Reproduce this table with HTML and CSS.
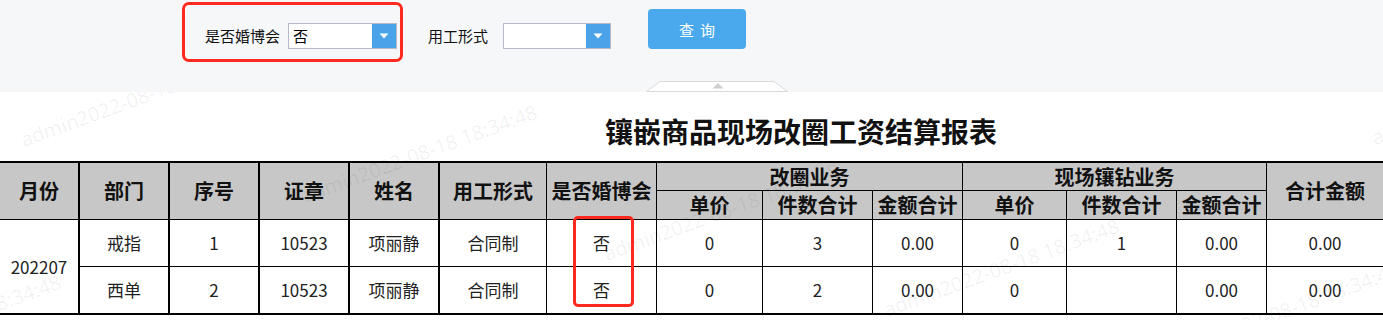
FILE: index.html
```html
<!DOCTYPE html>
<html lang="zh-CN">
<head>
<meta charset="utf-8">
<title>镶嵌商品现场改圈工资结算报表</title>
<link rel="stylesheet" href="styles.css">
</head>
<body>
<div class="page">
  <div class="panel">
    <div class="filters">
      <div class="filter filter-hl">
        <span class="flabel">是否婚博会</span>
        <div class="select sel1">
          <span class="sval">否</span>
          <span class="sbtn"><svg width="10" height="6" viewBox="0 0 10 6"><path d="M0.5 0.5 L9.5 0.5 L5 5.5 Z" fill="#fff"/></svg></span>
        </div>
      </div>
      <div class="filter filter2">
        <span class="flabel flabel2">用工形式</span>
        <div class="select sel2">
          <span class="sval"></span>
          <span class="sbtn"><svg width="10" height="6" viewBox="0 0 10 6"><path d="M0.5 0.5 L9.5 0.5 L5 5.5 Z" fill="#fff"/></svg></span>
        </div>
      </div>
      <button class="query">查询</button>
    </div>
    <svg class="handle" width="142" height="11" viewBox="0 0 142 11">
      <path d="M14 0.5 L128 0.5 L141.5 10.5 L0.5 10.5 Z" fill="#fff" stroke="#d9d9d9" stroke-width="1"/>
      <path d="M72 2 L66.5 7.5 L77.5 7.5 Z" fill="#cfcfcf"/>
    </svg>
  </div>

  <h1 class="title">镶嵌商品现场改圈工资结算报表</h1>

  <div class="tablewrap">
    <table class="report">
      <colgroup>
        <col class="w80"><col class="w90"><col class="w90"><col class="w90"><col class="w90">
        <col class="w107"><col class="w110"><col class="w106"><col class="w110"><col class="w90">
        <col class="w104"><col class="w110"><col class="w90"><col class="w116">
      </colgroup>
      <thead>
        <tr class="hr1">
          <th rowspan="2" class="thick">月份</th>
          <th rowspan="2" class="thick">部门</th>
          <th rowspan="2" class="thick">序号</th>
          <th rowspan="2" class="thick">证章</th>
          <th rowspan="2" class="thick">姓名</th>
          <th rowspan="2">用工形式</th>
          <th rowspan="2">是否婚博会</th>
          <th colspan="3">改圈业务</th>
          <th colspan="3">现场镶钻业务</th>
          <th rowspan="2" class="last">合计金额</th>
        </tr>
        <tr class="hr2">
          <th>单价</th><th>件数合计</th><th>金额合计</th>
          <th>单价</th><th>件数合计</th><th>金额合计</th>
        </tr>
      </thead>
      <tbody>
        <tr class="dr1">
          <td rowspan="2" class="thick month">202207</td>
          <td class="thick">戒指</td>
          <td class="thick">1</td>
          <td class="thick">10523</td>
          <td class="thick">项丽静</td>
          <td>合同制</td>
          <td>否</td>
          <td>0</td>
          <td>3</td>
          <td>0.00</td>
          <td>0</td>
          <td>1</td>
          <td>0.00</td>
          <td class="last">0.00</td>
        </tr>
        <tr class="dr2">
          <td class="thick">西单</td>
          <td class="thick">2</td>
          <td class="thick">10523</td>
          <td class="thick">项丽静</td>
          <td>合同制</td>
          <td>否</td>
          <td>0</td>
          <td>2</td>
          <td>0.00</td>
          <td>0</td>
          <td></td>
          <td>0.00</td>
          <td class="last">0.00</td>
        </tr>
      </tbody>
    </table>
    <div class="cell-mark"></div>
  </div>

  <div class="watermarks">
    <span class="wm wm1">admin2022-08-18 18:34:48</span>
    <span class="wm wm2">admin2022-08-18 18:34:48</span>
    <span class="wm wm3">admin2022-08-18 18:34:48</span>
    <span class="wm wm4">admin2022-08-18 18:34:48</span>
    <span class="wm wm5">admin2022-08-18 18:34:48</span>
    <span class="wm wm6">admin2022-08-18 18:34:48</span>
    <span class="wm wm7">admin2022-08-18 18:34:48</span>
  </div>
</div>
</body>
</html>
```

FILE: styles.css
```css
html, body {
  margin: 0;
  padding: 0;
  background: #fff;
}

.page {
  position: relative;
  width: 1383px;
  height: 320px;
  overflow: hidden;
  font-family: "Noto Sans CJK SC", "Noto Sans", sans-serif;
  color: #222;
}

/* ---------- filter panel ---------- */
.panel {
  position: relative;
  z-index: 3;
  height: 92px;
  background: #f6f7f9;
}

.filters {
  display: flex;
  align-items: flex-start;
  padding: 2px 0 0 182px;
}

.filter {
  display: flex;
  align-items: center;
}

.filter-hl {
  border: 3px solid #ff2a1f;
  border-radius: 7px;
  padding: 18px 3px 10px 20px;
}

.filter2 {
  margin: 21px 0 0 25px;
}

.flabel {
  font-size: 15px;
  line-height: 20px;
  color: #111;
  margin-right: 8px;
}

.flabel2 {
  margin-right: 15px;
}

.select {
  display: flex;
  box-sizing: border-box;
  height: 26px;
  border: 1px solid #b6b9c8;
  background: #fff;
}

.sel1 { width: 109px; }
.sel2 { width: 108px; }

.sval {
  flex: 1;
  font-size: 15px;
  line-height: 24px;
  padding-left: 4px;
  color: #000;
}

.sbtn {
  width: 24px;
  background: #4aa3e8;
  display: flex;
  align-items: center;
  justify-content: center;
}

.query {
  margin: 7px 0 0 37px;
  width: 98px;
  height: 40px;
  border: none;
  border-radius: 4px;
  background: #49a9ec;
  color: #fff;
  font-family: "Noto Sans CJK SC", sans-serif;
  font-size: 15px;
  letter-spacing: 6px;
  text-indent: 6px;
  padding: 0;
}

.handle {
  position: absolute;
  left: 646px;
  top: 81px;
  display: block;
}

/* ---------- title ---------- */
.title {
  margin: 0;
  padding: 9px 0 0 605px;
  height: 60px;
  line-height: 60px;
  font-size: 28px;
  font-weight: 700;
  color: #111;
  white-space: nowrap;
}

/* ---------- table ---------- */
.tablewrap {
  position: relative;
}

.report {
  table-layout: fixed;
  width: 1383px;
  border-collapse: separate;
  border-spacing: 0;
  border-top: 2px solid #000;
  border-bottom: 2px solid #000;
}

.w80 { width: 80px; }
.w90 { width: 90px; }
.w104 { width: 104px; }
.w106 { width: 106px; }
.w107 { width: 107px; }
.w110 { width: 110px; }
.w116 { width: 116px; }

.report th,
.report td {
  padding: 0;
  text-align: center;
  vertical-align: middle;
  border-right: 1px solid #000;
  border-bottom: 1px solid #000;
  white-space: nowrap;
  overflow: hidden;
}

.report th.thick,
.report td.thick {
  border-right-width: 2px;
}

.report th.last,
.report td.last {
  border-right: none;
}

.report th {
  background: #c7c7c7;
  font-size: 20px;
  font-weight: 700;
  color: #111;
  line-height: 26px;
}

.report td {
  font-size: 17px;
  color: #222;
  line-height: 24px;
}

.report .dr2 td,
.report td.month {
  border-bottom: none;
}

.hr1 { height: 28px; }
.hr2 { height: 29px; }
.dr1 { height: 47px; }
.dr2 { height: 46px; }

.cell-mark {
  position: absolute;
  left: 573px;
  top: 55px;
  width: 55px;
  height: 85px;
  border: 3px solid #ff2a1f;
  border-radius: 5px;
}

/* ---------- watermarks ---------- */
.watermarks {
  position: absolute;
  inset: 0;
  z-index: 2;
  pointer-events: none;
}

.wm {
  position: absolute;
  font-family: "Noto Sans", sans-serif;
  font-size: 20px;
  line-height: 20px;
  color: rgba(0, 0, 0, 0.06);
  white-space: nowrap;
  transform-origin: 0 100%;
  transform: rotate(-20deg);
}

.wm1 { left: 25px; top: 130px; }
.wm2 { left: 306px; top: 186px; }
.wm3 { left: 608px; top: 244px; }
.wm4 { left: 888px; top: 300px; }
.wm5 { left: 1168px; top: 344px; }
.wm6 { left: 1376px; top: 128px; }
.wm7 { left: -170px; top: 356px; }
```
